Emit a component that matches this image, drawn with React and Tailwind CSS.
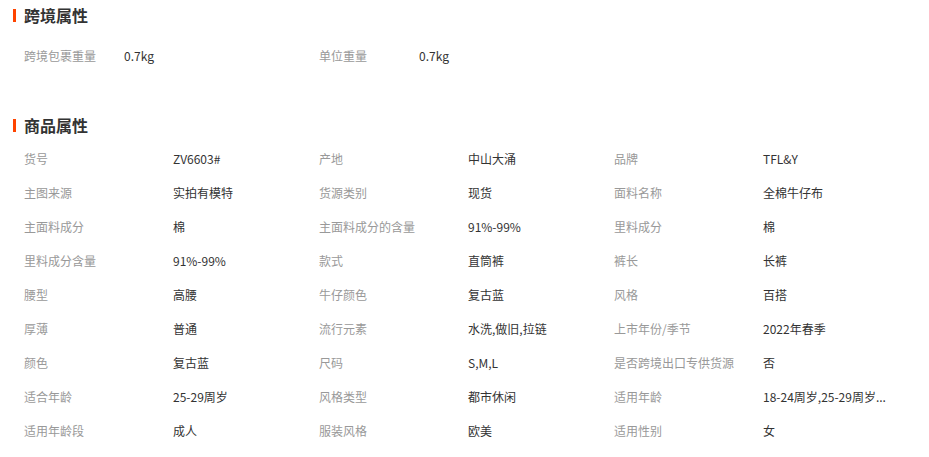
import React from "react";

const crossBorder = [
  ["跨境包裹重量", "0.7kg"],
  ["单位重量", "0.7kg"],
];

const attrs = [
  ["货号", "ZV6603#"],
  ["产地", "中山大涌"],
  ["品牌", "TFL&Y"],
  ["主图来源", "实拍有模特"],
  ["货源类别", "现货"],
  ["面料名称", "全棉牛仔布"],
  ["主面料成分", "棉"],
  ["主面料成分的含量", "91%-99%"],
  ["里料成分", "棉"],
  ["里料成分含量", "91%-99%"],
  ["款式", "直筒裤"],
  ["裤长", "长裤"],
  ["腰型", "高腰"],
  ["牛仔颜色", "复古蓝"],
  ["风格", "百搭"],
  ["厚薄", "普通"],
  ["流行元素", "水洗,做旧,拉链"],
  ["上市年份/季节", "2022年春季"],
  ["颜色", "复古蓝"],
  ["尺码", "S,M,L"],
  ["是否跨境出口专供货源", "否"],
  ["适合年龄", "25-29周岁"],
  ["风格类型", "都市休闲"],
  ["适用年龄", "18-24周岁,25-29周岁..."],
  ["适用年龄段", "成人"],
  ["服装风格", "欧美"],
  ["适用性别", "女"],
];

function Heading({ title }) {
  return (
    <div className="flex h-[20px] items-center pl-[13px]">
      <span className="h-[13px] w-[3px] bg-[#ff4400]" />
      <span className="ml-[8px] text-[16px] font-bold text-[#333]">{title}</span>
    </div>
  );
}

export default function App() {
  return (
    <div
      className="h-[457px] w-[929px] bg-white pt-[5px] text-[12px]"
      style={{ fontFamily: '"Noto Sans CJK SC", "Microsoft YaHei", sans-serif' }}
    >
      <Heading title="跨境属性" />
      <div className="mt-[14px] flex pl-[24px]">
        {crossBorder.map(([k, v]) => (
          <div key={k} className="flex h-[34px] w-[295px] items-center">
            <span className="w-[100px] text-[#999]">{k}</span>
            <span className="text-[#333]">{v}</span>
          </div>
        ))}
      </div>

      <div className="mt-[42px]">
        <Heading title="商品属性" />
      </div>
      <div className="mt-[7px] grid grid-cols-[295px_295px_295px] pl-[24px]">
        {attrs.map(([k, v]) => (
          <div key={k} className="flex h-[34px] items-center">
            <span className="w-[149px] shrink-0 text-[#999]">{k}</span>
            <span className="whitespace-nowrap text-[#333]">{v}</span>
          </div>
        ))}
      </div>
    </div>
  );
}
